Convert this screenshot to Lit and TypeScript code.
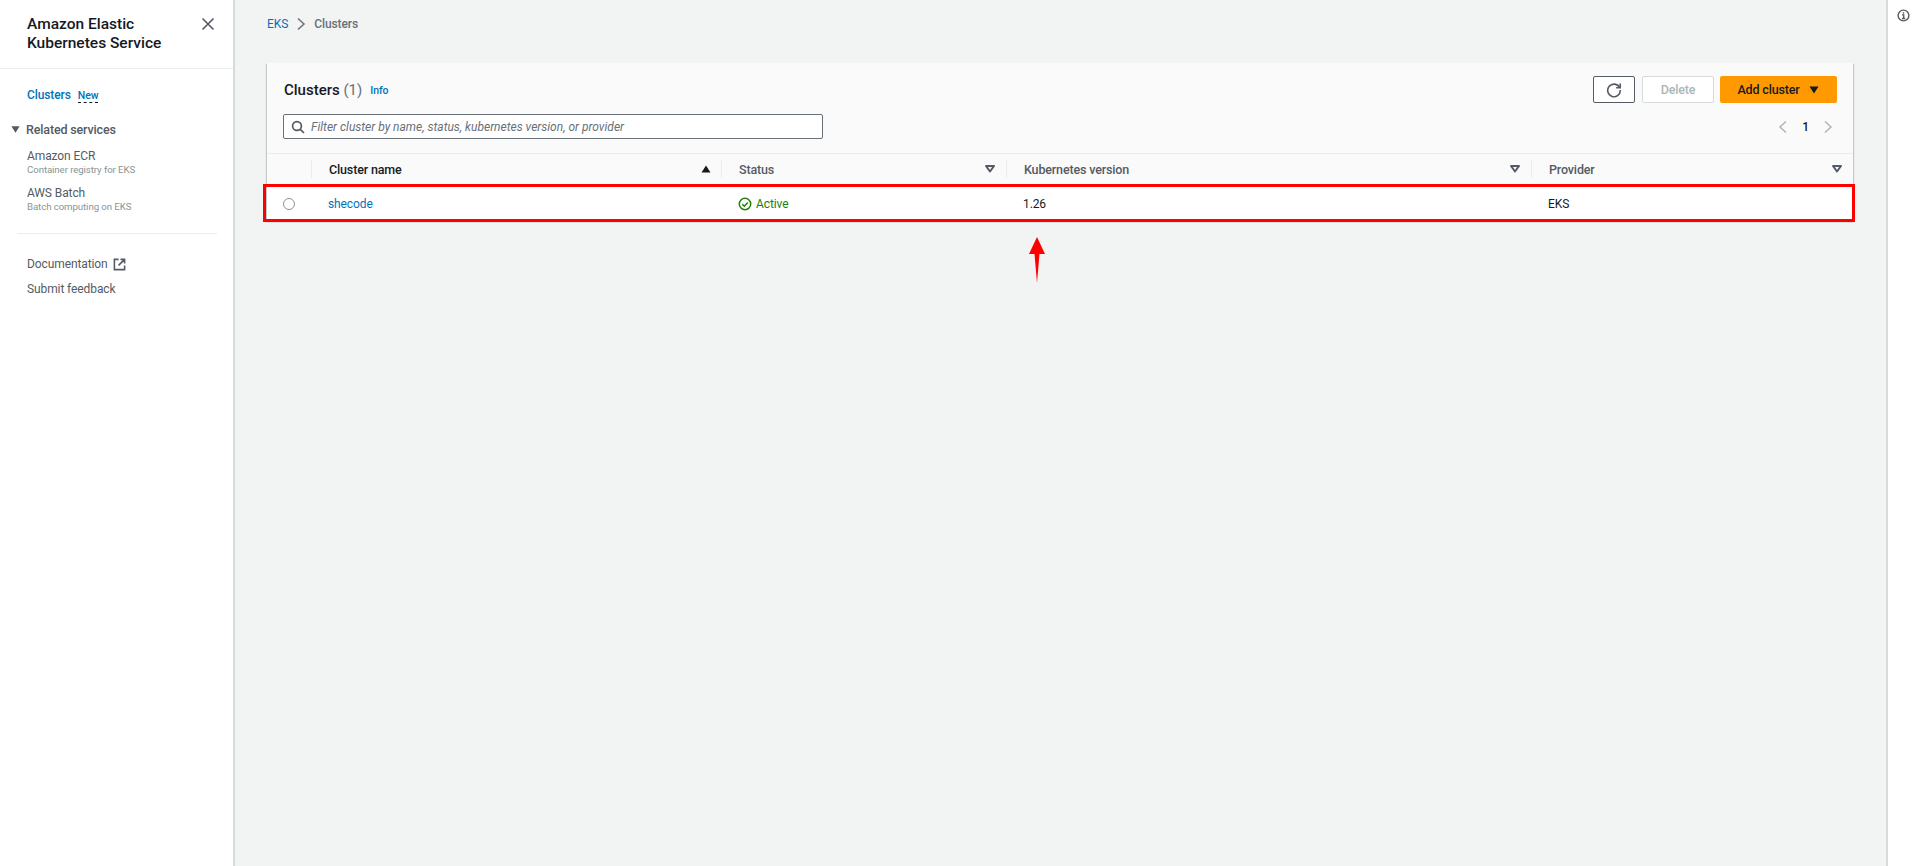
import { LitElement, css, html, svg } from 'lit'
import { customElement } from 'lit/decorators.js'

const caret = svg`<path d="M1.5 2.5h9L6 9.5z" fill="currentColor"/>`
const caretOpen = svg`<path d="M2 3h8L6 8.5z" fill="none" stroke="currentColor" stroke-width="2" stroke-linejoin="round"/>`

@customElement('app-root')
export class AppRoot extends LitElement {
  #sortIcon(open: boolean) {
    return html`<svg class="sort ${open ? 'open' : ''}" viewBox="0 0 12 12" width="12" height="12">
      ${open ? caretOpen : svg`<path d="M1.5 9.5h9L6 2.5z" fill="currentColor"/>`}
    </svg>`
  }

  #sidebar() {
    return html`
      <nav class="sidebar">
        <div class="side-head">
          <div class="side-title">Amazon Elastic<br />Kubernetes Service</div>
          <svg class="close" viewBox="0 0 14 14" width="14" height="14">
            <path d="M1.5 1.5l11 11M12.5 1.5l-11 11" fill="none" stroke="currentColor" stroke-width="1.6" />
          </svg>
        </div>
        <div class="side-links">
          <div class="active-row"><a class="active">Clusters</a><span class="new">New</span></div>
          <div class="related">
            <svg viewBox="0 0 12 12" width="11" height="11">${caret}</svg>
            <span>Related services</span>
          </div>
          <div class="service first"><div>Amazon ECR</div><small>Container registry for EKS</small></div>
          <div class="service"><div>AWS Batch</div><small>Batch computing on EKS</small></div>
        </div>
        <div class="side-rule"></div>
        <div class="side-foot">
          <div class="doc">
            Documentation
            <svg viewBox="0 0 14 14" width="13" height="13" fill="none" stroke="currentColor" stroke-width="1.7">
              <path d="M6 1.5H1.5v11h11V8M8 1.5h4.5V6M12.5 1.5L6 8" />
            </svg>
          </div>
          <div>Submit feedback</div>
        </div>
      </nav>
    `
  }

  #card() {
    return html`
      <section class="card">
        <header class="card-head">
          <div class="title-row">
            <h2>Clusters <span>(1)</span></h2>
            <a class="info">Info</a>
            <div class="actions">
              <button class="refresh" aria-label="Refresh">
                <svg viewBox="0 0 16 16" width="16" height="16" fill="none" stroke="currentColor" stroke-width="1.6">
                  <path d="M13.6 5.5A6.3 6.3 0 1 0 14.3 8" />
                  <path d="M14.2 1.6v4.1h-4.1" />
                </svg>
              </button>
              <button class="delete">Delete</button>
              <button class="add">
                Add cluster
                <svg viewBox="0 0 12 12" width="12" height="12">${caret}</svg>
              </button>
            </div>
          </div>
          <div class="filter-row">
            <div class="search">
              <svg viewBox="0 0 14 14" width="14" height="14" fill="none" stroke="currentColor" stroke-width="1.7">
                <circle cx="6" cy="6" r="4.4" />
                <path d="M9.3 9.3l3.7 3.7" />
              </svg>
              <span>Filter cluster by name, status, kubernetes version, or provider</span>
            </div>
            <div class="pager">
              <svg viewBox="0 0 10 14" width="10" height="14" fill="none" stroke="currentColor" stroke-width="1.5">
                <path d="M8 1.5L2 7l6 5.5" />
              </svg>
              <b>1</b>
              <svg viewBox="0 0 10 14" width="10" height="14" fill="none" stroke="currentColor" stroke-width="1.5">
                <path d="M2 1.5L8 7l-6 5.5" />
              </svg>
            </div>
          </div>
        </header>
        <div class="thead grid">
          <div class="th select"></div>
          <div class="th sorted">Cluster name ${this.#sortIcon(false)}</div>
          <div class="th">Status ${this.#sortIcon(true)}</div>
          <div class="th">Kubernetes version ${this.#sortIcon(true)}</div>
          <div class="th">Provider ${this.#sortIcon(true)}</div>
        </div>
        <div class="trow grid">
          <div class="td radio-cell"><span class="radio"></span></div>
          <div class="td"><a>shecode</a></div>
          <div class="td active-status">
            <svg viewBox="0 0 14 14" width="14" height="14" fill="none" stroke="currentColor" stroke-width="1.5">
              <circle cx="7" cy="7" r="5.7" />
              <path d="M4.3 7.2l2 2 3.5-3.8" />
            </svg>
            Active
          </div>
          <div class="td">1.26</div>
          <div class="td">EKS</div>
        </div>
        <div class="highlight"></div>
        <svg class="arrow" viewBox="0 0 16 46" width="16" height="46">
          <path d="M8 0L16 17H10.5L8 46L5.5 17H0z" fill="#ff0000" />
        </svg>
      </section>
    `
  }

  render() {
    return html`
      <div class="page">
        ${this.#sidebar()}
        <main class="main">
          <div class="crumbs">
            <a>EKS</a>
            <svg viewBox="0 0 10 14" width="10" height="14" fill="none" stroke="currentColor" stroke-width="1.5">
              <path d="M2 1.5L8 7l-6 5.5" />
            </svg>
            <span>Clusters</span>
          </div>
          ${this.#card()}
        </main>
        <aside class="tools">
          <svg viewBox="0 0 14 14" width="13" height="13" fill="none" stroke="currentColor" stroke-width="1.5">
            <circle cx="7" cy="7" r="5.8" />
            <path d="M5.4 6.3H7.2V10M5.4 10.2h3.4M7 3.4v1.6" />
          </svg>
        </aside>
      </div>
    `
  }

  static styles = css`
    :host {
      display: block;
      font-family: Roboto, 'Noto Sans', sans-serif;
      font-size: 12px;
      letter-spacing: -0.1px;
      color: #16191f;
    }

    .page {
      display: flex;
      height: 866px;
      background: #f2f3f3;
    }

    a {
      color: #0073bb;
    }

    /* sidebar */
    .sidebar {
      width: 233px;
      flex: none;
      background: #fff;
      border-right: 2px solid #d5dbdb;
      color: #545b64;
    }

    .side-head {
      height: 69px;
      box-sizing: border-box;
      border-bottom: 1px solid #eaeded;
      padding: 15px 18px 0 27px;
      display: flex;
      justify-content: space-between;
    }

    .side-title {
      font-size: 15.5px;
      line-height: 19px;
      font-weight: 500;
      letter-spacing: 0;
      color: #16191f;
    }

    .close {
      margin-top: 2px;
      color: #545b64;
    }

    .side-links {
      padding: 18px 0 0 27px;
    }

    .active-row {
      display: flex;
      align-items: center;
      gap: 7px;
      height: 16px;
    }

    .active {
      font-weight: 500;
      color: #0073bb;
    }

    .new {
      font-size: 10.5px;
      font-weight: 500;
      line-height: 13px;
      margin-top: 2px;
      color: #0073bb;
      border-bottom: 1px dashed #16191f;
    }

    .related {
      display: flex;
      align-items: center;
      gap: 5px;
      margin: 18px 0 0 -17px;
      height: 16px;
      font-size: 12.5px;
      letter-spacing: -0.15px;
      font-weight: 500;
      color: #545b64;
    }

    .service {
      margin-top: 9px;
      line-height: 16px;
    }

    .service.first {
      margin-top: 11px;
    }

    .service small {
      display: block;
      font-size: 9.7px;
      line-height: 12px;
      color: #879596;
    }

    .side-rule {
      margin: 20px 16px 0 17px;
      height: 1px;
      background: #eaeded;
    }

    .side-foot {
      padding: 22px 0 0 27px;
      display: flex;
      flex-direction: column;
      gap: 9px;
      line-height: 16px;
    }

    .doc {
      display: flex;
      align-items: center;
      gap: 5px;
    }

    /* main */
    .main {
      flex: 1;
      min-width: 0;
      padding: 0 33px 0 32px;
    }

    .crumbs {
      height: 48px;
      display: flex;
      align-items: center;
      gap: 8px;
      color: #687078;
      margin-bottom: 15px;
    }

    .crumbs span {
      font-weight: 500;
      color: #687078;
    }

    .card {
      position: relative;
      background: #fff;
      box-shadow: 0 1px 1px 0 rgba(0, 28, 36, 0.3), 1px 1px 1px 0 rgba(0, 28, 36, 0.15),
        -1px 1px 1px 0 rgba(0, 28, 36, 0.15);
    }

    .card-head {
      background: #fafafa;
      border-bottom: 1px solid #eaeded;
      height: 91px;
      box-sizing: border-box;
      padding: 13px 16px 0 17px;
    }

    .title-row {
      display: flex;
      align-items: center;
      height: 27px;
    }

    h2 {
      margin: 0;
      font-size: 15px;
      font-weight: 500;
      letter-spacing: 0;
      color: #16191f;
    }

    h2 span {
      font-weight: 400;
      color: #687078;
    }

    .info {
      font-size: 10.5px;
      font-weight: 500;
      margin: 2px 0 0 8px;
    }

    .actions {
      margin-left: auto;
      display: flex;
      gap: 7px;
    }

    button {
      font: inherit;
      font-size: 12.5px;
      letter-spacing: -0.15px;
      font-weight: 500;
      height: 27px;
      border-radius: 2px;
      padding: 0;
      display: flex;
      align-items: center;
      justify-content: center;
    }

    .refresh {
      width: 42px;
      background: #fff;
      border: 1px solid #545b64;
      color: #545b64;
    }

    .delete {
      width: 72px;
      background: #fff;
      border: 1px solid #d5dbdb;
      color: #aab7b8;
    }

    .add {
      width: 117px;
      background: #ff9900;
      border: none;
      color: #16191f;
      gap: 8px;
      margin-left: -1px;
    }

    .filter-row {
      display: flex;
      align-items: center;
      justify-content: space-between;
      margin: 11px 0 0 -1px;
    }

    .search {
      width: 540px;
      height: 25px;
      box-sizing: border-box;
      background: #fff;
      border: 1px solid #687078;
      border-radius: 2px;
      display: flex;
      align-items: center;
      gap: 6px;
      padding-left: 7px;
      color: #545b64;
    }

    .search span {
      font-style: italic;
      font-size: 12px;
      letter-spacing: 0;
      color: #687078;
    }

    .pager {
      display: flex;
      align-items: center;
      gap: 14px;
      color: #aab7b8;
      margin-right: 4px;
    }

    .pager b {
      font-weight: 500;
      color: #16191f;
    }

    /* table */
    .grid {
      display: grid;
      grid-template-columns: 44px 410px 285px 525px 1fr;
    }

    .thead {
      background: #fafafa;
      height: 32px;
      box-sizing: border-box;
      padding-bottom: 2px;
      align-items: center;
      font-size: 12.5px;
      letter-spacing: -0.15px;
      font-weight: 500;
      color: #545b64;
    }

    .th {
      height: 18px;
      padding: 0 10px 0 17px;
      display: flex;
      align-items: center;
      justify-content: space-between;
      border-left: 1px solid #eaeded;
    }

    .th.select {
      border-left: none;
    }

    .th.sorted {
      color: #16191f;
      padding-right: 9px;
    }

    .sort {
      color: #545b64;
      flex: none;
    }

    .sorted .sort {
      color: #16191f;
    }

    .trow {
      height: 35px;
      box-sizing: border-box;
      align-items: center;
      background: #fff;
      color: #16191f;
    }

    .td {
      padding-left: 17px;
      display: flex;
      align-items: center;
    }

    .radio-cell {
      padding-left: 16px;
    }

    .radio {
      width: 10px;
      height: 10px;
      border: 1px solid #879596;
      border-radius: 50%;
      background: #fff;
    }

    .active-status {
      color: #1d8102;
      gap: 4px;
    }

    .highlight {
      position: absolute;
      left: -4px;
      right: -2px;
      top: 121px;
      height: 38px;
      box-sizing: border-box;
      border: 3px solid #ff0000;
      pointer-events: none;
    }

    .arrow {
      position: absolute;
      left: 762px;
      top: 174px;
    }

    .tools {
      width: 34px;
      flex: none;
      background: #fff;
      border-left: 2px solid #d5dbdb;
      display: flex;
      justify-content: center;
      padding: 9px 2px 0 0;
      box-sizing: border-box;
      color: #545b64;
    }

    .tools svg {
      flex: none;
    }
  `
}
